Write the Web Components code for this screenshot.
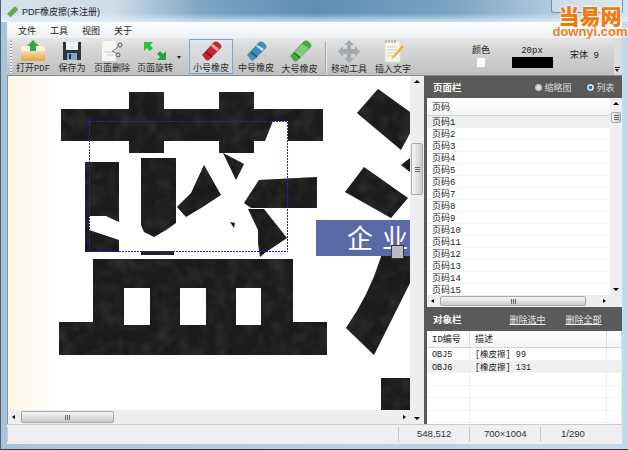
<!DOCTYPE html>
<html lang="zh-CN">
<head>
<meta charset="utf-8">
<title>PDF橡皮擦</title>
<style>
  html,body{margin:0;padding:0;background:#9db8d0}
  body{font-family:"Liberation Mono","Noto Sans CJK SC",monospace;font-size:9px;color:#222}
</style>
</head>
<body>
<pdf-window>
  <title-bar slot="title">PDF橡皮擦(未注册)</title-bar>
  <menu-bar slot="menu"><span>文件</span><span>工具</span><span>视图</span><span>关于</span></menu-bar>
  <tool-bar slot="tools">
    <tool-button label="打开PDF" style="--w:38px">
      <svg width="28" height="22" viewBox="0 0 28 22">
        <defs><linearGradient id="f" x1="0" y1="0" x2="0" y2="1"><stop offset="0" stop-color="#fbeec2"/><stop offset="1" stop-color="#e3a548"/></linearGradient></defs>
        <path d="M2 8h24v12q0 1-1 1H3q-1 0-1-1z" fill="url(#f)"/><path d="M2 8q0-2 2-2h20q2 0 2 2v3H2z" fill="#fdf6dc"/>
        <path d="M14 0l6 6h-3v5h-6V6H8z" fill="#2fa84a"/>
      </svg>
    </tool-button>
    <tool-button label="保存为" style="--w:40px">
      <svg width="22" height="22" viewBox="0 0 22 22">
        <path d="M2 2h18v18H2z" fill="#2c3440"/><path d="M5 2h12v8H5z" fill="#eef3f8"/><path d="M6 13h10v7H6z" fill="#7ea6c8"/><path d="M8 14h2v5H8z" fill="#25303c"/>
      </svg>
    </tool-button>
    <tool-button label="页面删除" style="--w:40px">
      <svg width="26" height="22" viewBox="0 0 26 22">
        <path d="M3 1h14v20H3z" fill="#f6f6f6"/><path d="M6 12h8M8 15h6" stroke="#ccc"/>
        <circle cx="21" cy="5" r="2" fill="none" stroke="#555"/><circle cx="19" cy="15" r="2" fill="none" stroke="#555"/><path d="M19 7l-5 4M17 13l-4-2" stroke="#666"/>
      </svg>
    </tool-button>
    <tool-button label="页面旋转" style="--w:40px;margin-left:3px">
      <svg width="24" height="22" viewBox="0 0 24 22">
        <path d="M1 2l9 0-3 3 3 3-3 3-3-3-3 3z" fill="#28c43a"/><path d="M23 20h-9l3-3-3-3 3-3 3 3 3-3z" fill="#1fa64b"/>
      </svg>
    </tool-button>
    <span class="caret"></span>
    <tool-button label="小号橡皮" selected style="--w:44px;margin-left:5px">
      <svg width="24" height="22" viewBox="0 0 24 22">
        <path d="M3 15L15 2q2-1 4 0l3 3q1 2 0 3L10 20q-2 1-3 0z" fill="#c8242c"/><path d="M14 4l6 5-2 2-6-5z" fill="#f0b0b0"/><path d="M7 12l6 5" stroke="#7c1216" stroke-width="2"/>
      </svg>
    </tool-button>
    <tool-button label="中号橡皮" style="--w:44px;margin-left:1px">
      <svg width="24" height="22" viewBox="0 0 24 22">
        <path d="M3 15L15 2q2-1 4 0l3 3q1 2 0 3L10 20q-2 1-3 0z" fill="#3f8fb8"/><path d="M13 5l7 4-2 2-6-5z" fill="#cfe6f2"/><path d="M7 12l6 5" stroke="#24607e" stroke-width="2"/>
      </svg>
    </tool-button>
    <tool-button label="大号橡皮" style="--w:43px">
      <svg width="26" height="23" viewBox="0 0 26 23">
        <path d="M3 16L17 1q2-1 4 0l3 3q1 2 0 3L10 21q-2 1-3 0z" fill="#46a83e"/><path d="M15 4l7 4-10 11-6-5z" fill="#7fce72"/><path d="M7 13l6 5" stroke="#2a7426" stroke-width="2"/>
      </svg>
    </tool-button>
    <span class="sep"></span>
    <tool-button label="移动工具" style="--w:40px;margin-left:3px">
      <svg width="24" height="23" viewBox="0 0 24 23">
        <path d="M12 0l5 5h-3v4h4V6l5 5.500-5 5.500v-3h-4v4h3l-5 5-5-5h3v-4H6v3L1 11.500 6 6v3h4V5H7z" fill="#a5aaae"/>
      </svg>
    </tool-button>
    <tool-button label="插入文字" style="--w:40px;margin-left:4px">
      <svg width="22" height="24" viewBox="0 0 22 24">
        <path d="M3 2h15v21H3z" fill="#f8f6e8" stroke="#ddd"/><path d="M5 8h10M5 11h10M5 14h8M5 17h6" stroke="#c9cfd6"/>
        <path d="M20 6L11 17l-2 3 3-1L22 8z" fill="#eeb040"/><path d="M4 1v3M7 1v3M10 1v3M13 1v3" stroke="#888"/>
      </svg>
    </tool-button>
    <tool-options></tool-options>
  </tool-bar>
  <doc-view slot="doc"></doc-view>
  <side-panel slot="side"></side-panel>
  <status-bar slot="status"></status-bar>
  <water-mark slot="mark"></water-mark>
</pdf-window>

<script>
function shell(el, html){
  el.attachShadow({mode:'open'}).innerHTML = html;
}

customElements.define('pdf-window', class extends HTMLElement{
  constructor(){
    super();
    shell(this, `<style>
      :host{display:block;position:relative;width:628px;height:450px;overflow:hidden;box-sizing:border-box;
        background:linear-gradient(90deg,#a9c3da 0,#c6d9e9 100%);border-bottom:1px solid #2c3a48;border-left:1px solid #51606e}
      .wrap{display:grid;grid-template-rows:22px 16px 38px 348px 20px;height:444px}
      .mid{display:grid;grid-template-columns:1fr 198px;margin:0 6px 0 6px;min-height:0}
      .inner{margin:0 6px 0 6px}
    </style>
    <div class="wrap">
      <slot name="title"></slot>
      <div class="inner"><slot name="menu"></slot></div>
      <div class="inner"><slot name="tools"></slot></div>
      <div class="mid"><slot name="doc"></slot><slot name="side"></slot></div>
      <div class="inner"><slot name="status"></slot></div>
    </div>
    <slot name="mark"></slot>`);
  }
});

customElements.define('title-bar', class extends HTMLElement{
  constructor(){
    super();
    shell(this, `<style>
      :host{display:flex;align-items:center;gap:4px;height:22px;padding-left:6px;box-sizing:border-box;color:#1d2630;
        font-family:"Liberation Sans","Noto Sans CJK SC",sans-serif;font-size:9px;
        background:linear-gradient(180deg,rgba(255,255,255,0) 60%,rgba(235,243,250,.75) 100%),
          linear-gradient(90deg,#d4e1ec 0,#cfdde9 18%,#7da4c5 32%,#5f8db3 50%,#7ba3c3 72%,#a9c6dd 86%,#d3e2ee 100%);}
      .btns{position:absolute;left:550px;top:0;width:72px;height:13px;box-sizing:border-box;border:1px solid #7d8d9b;border-top:0;border-radius:0 0 3px 3px;background:rgba(235,240,245,.45)}
    </style>
    <svg width="11" height="11" viewBox="0 0 11 11"><path d="M0 8L7 1q1-1 2 0l2 2q0 1-1 2L4 11H2z" fill="#5cae4a"/><path d="M0 8l3 3H1z" fill="#e4eee0"/></svg>
    <slot></slot><span class="btns"></span>`);
  }
});

customElements.define('menu-bar', class extends HTMLElement{
  constructor(){
    super();
    shell(this, `<style>
      :host{display:flex;align-items:center;gap:14px;height:16px;padding-left:11px;background:linear-gradient(180deg,#fafbfd,#eef1f5);color:#1d1d1d}
    </style><slot></slot>`);
  }
});

customElements.define('tool-bar', class extends HTMLElement{
  constructor(){
    super();
    shell(this, `<style>
      :host{display:flex;align-items:flex-start;height:38px;box-sizing:border-box;padding:1px 0 0 3px;position:relative;
        background:linear-gradient(180deg,#e6e6e6 0,#d6d6d6 30%,#c0c0c0 100%);border-bottom:1px solid #8a8a8a}
      .grip{width:2px;height:32px;margin:2px 2px 0 0;background:repeating-linear-gradient(180deg,#8f8f8f 0 1px,#f4f4f4 1px 3px)}
      ::slotted(.caret){width:0;height:0;margin:17px 3px 0 2px;border:2px solid transparent;border-top:3px solid #222;border-bottom:0}
      ::slotted(.sep){width:1px;height:32px;margin:3px 0 0 4px;background:#a8a8a8;box-shadow:1px 0 #e6e6e6}
      .more{position:absolute;right:0;top:0;bottom:0;width:8px;background:#dcdcdc;font-size:0}
      .more i{position:absolute;left:1px;top:31px;width:0;height:0;border:2.500px solid transparent;border-top:3px solid #222;border-bottom:0}
      .more b{position:absolute;left:1px;top:29px;width:5px;height:1px;background:#222}
    </style><span class="grip"></span><slot></slot><span class="more"><b></b><i></i></span>`);
  }
});

customElements.define('tool-button', class extends HTMLElement{
  constructor(){
    super();
    shell(this, `<style>
      :host{display:flex;flex-direction:column;align-items:center;width:var(--w,40px);height:35px;box-sizing:border-box;color:#2b2b2b;border:1px solid transparent;flex:none}
      :host([selected]){border-color:#7fa9cc;background:rgba(225,235,245,.35)}
      .ic{height:23px;display:flex;align-items:flex-end;justify-content:center}
      .lb{line-height:12px;margin-top:1px;white-space:nowrap}
      ::slotted(svg){filter:blur(.3px)}
    </style><div class="ic"><slot></slot></div><div class="lb"></div>`);
  }
  connectedCallback(){
    this.shadowRoot.querySelector('.lb').textContent = this.getAttribute('label');
  }
});

customElements.define('tool-options', class extends HTMLElement{
  constructor(){
    super();
    shell(this, `<style>
      :host{display:flex;align-items:flex-start;color:#222;margin-left:53px}
      .c{display:flex;flex-direction:column;align-items:center}
      .col{width:30px;padding-top:7px;line-height:10px}
      .col i{width:8px;height:9px;background:#fff;margin-top:2px}
      .siz{width:42px;margin-left:15px;padding-top:7px;line-height:10px}
      .siz i{width:41px;height:11px;background:#000;margin-top:1px}
      .fnt{margin-left:17px;padding-top:12px;line-height:10px;white-space:nowrap}
    </style>
    <div class="c col">颜色<i></i></div>
    <div class="c siz">20px<i></i></div>
    <div class="fnt">宋体 9</div>`);
  }
});

customElements.define('scroll-bar', class extends HTMLElement{
  constructor(){
    super();
    shell(this, `<style>
      :host{display:flex;flex-direction:column;width:14px;background:#eeeef0;box-sizing:border-box;flex:none}
      :host([orient=h]){flex-direction:row;width:auto;height:12px}
      .a{flex:none;width:100%;height:12px;display:flex;align-items:center;justify-content:center}
      :host([orient=h]) .a{width:12px;height:100%}
      .t{flex:1;min-width:0;min-height:0;display:flex;flex-direction:column}
      :host([orient=h]) .t{flex-direction:row}
      .th{margin:var(--at) 1px 0;height:var(--len);box-sizing:border-box;border:1px solid #a9a9ad;border-radius:2px;
        background:linear-gradient(90deg,#f6f6f6,#dcdcde 60%,#c8c8cc);display:flex;align-items:center;justify-content:center;flex:none}
      :host([orient=h]) .th{margin:1px 0 1px var(--at);height:auto;width:var(--len);background:linear-gradient(180deg,#f6f6f6,#dcdcde 60%,#c8c8cc)}
      .g{width:5px;height:5px;background:repeating-linear-gradient(180deg,#666 0 1px,transparent 1px 2px)}
      :host([orient=h]) .g{background:repeating-linear-gradient(90deg,#666 0 1px,transparent 1px 2px)}
      svg{display:block}
    </style>
    <div class="a"><svg width="6" height="6" viewBox="0 0 6 6"><path class="p1"/></svg></div>
    <div class="t"><div class="th"><span class="g"></span></div></div>
    <div class="a"><svg width="6" height="6" viewBox="0 0 6 6"><path class="p2"/></svg></div>`);
  }
  connectedCallback(){
    const h = this.getAttribute('orient') === 'h';
    const r = this.shadowRoot;
    r.querySelector('.p1').setAttribute('d', h ? 'M4 1v4L1 3z' : 'M3 1l3 3H0z');
    r.querySelector('.p2').setAttribute('d', h ? 'M2 1v4l3-2z' : 'M0 2h6L3 5z');
    this.style.setProperty('--at', this.getAttribute('at') + 'px');
    this.style.setProperty('--len', this.getAttribute('len') + 'px');
  }
});

customElements.define('doc-view', class extends HTMLElement{
  constructor(){
    super();
    shell(this, `<style>
      :host{display:grid;grid-template-columns:1fr 14px;grid-template-rows:334px 14px;min-width:0;border-left:1px solid #8a949c;box-sizing:border-box;background:#eeeef0}
      .page{overflow:hidden;background:linear-gradient(90deg,#fcf5e6 0,#fefaf2 22px,#fff 48px)}
      svg{display:block}
      scroll-bar[orient=h]{height:14px}
      .k path,.k rect{fill:#1b1b1a}
    </style>
    <div class="page">
      <svg width="403" height="334" viewBox="7 76 403 334">
        <defs>
          <!-- soft scan edges with faint mottling inside the ink -->
          <filter id="soft" x="-5%" y="-5%" width="110%" height="110%" color-interpolation-filters="sRGB">
            <feGaussianBlur in="SourceGraphic" stdDeviation=".55" result="ink"/>
            <feTurbulence type="fractalNoise" baseFrequency=".07" numOctaves="2" seed="4"/>
            <feColorMatrix values="0 0 0 0 .2  0 0 0 0 .2  0 0 0 0 .19  1.6 0 0 0 -.6" result="spots"/>
            <feComposite in="spots" in2="ink" operator="in" result="inked"/>
            <feMerge><feMergeNode in="ink"/><feMergeNode in="inked"/></feMerge>
          </filter>
        </defs>
        <g class="k" filter="url(#soft)">
          <path d="M60 109H128V92H163V109H218V92H253V109H322V141H253V153H218V141H163V153H128V141H60z"/>
          <path d="M84 162H118V222L105 216H84z"/>
          <path d="M84 216H88V230L118 240V252H84z"/>
          <path d="M140 158H175V223L165 230 153 237 143 232 140 225z"/>
          <rect x="140" y="251" width="33" height="4"/>
          <path d="M222 153L243 164 235 180z"/>
          <path d="M203 165L220 195 200 208 185 217 176 207 190 193z"/>
          <path d="M258 180L316 177V208H250L243 203z"/>
          <path d="M247 209H263L286 238 265 252 259 257 257 243 257 230z"/>
          <path d="M229 222L234 223 233 228z"/>
          <path d="M92 259H292V322H326V355H58V322H92zM123 288V325H149V288zM179 288V325H205V288zM235 288V325H260V288z" fill-rule="evenodd"/>
          <path d="M377 89L409 112V133L400 150 356 113z"/>
          <path d="M363 167L407 198 390 218 344 192z"/>
          <path d="M409 158L400 165 409 172z"/>
          <path d="M380 256H409V283L373 355 345 328Q368 295 380 257z"/>
          <rect x="380" y="378" width="30" height="32"/>
        </g>
        <path d="M272 121H287V141H264z" fill="#fff"/>
        <rect x="315" y="220" width="95" height="36" fill="#5a6aa6"/>
        <text x="346" y="248" font-family="Noto Sans CJK SC" font-size="26" fill="#fff">企</text>
        <text x="381" y="248" font-family="Noto Sans CJK SC" font-size="26" fill="#fff">业</text>
        <rect x="390.500" y="245.500" width="12" height="13" fill="#b9bcc6" stroke="#33363e"/>
        <rect x="88.500" y="121.500" width="198" height="130" fill="none" stroke="#2222c4" stroke-dasharray="2 1" shape-rendering="crispEdges"/>
      </svg>
    </div>
    <scroll-bar style="grid-row:1 / 3;grid-column:2" at="55" len="52"></scroll-bar>
    <scroll-bar orient="h" at="1" len="93"></scroll-bar>`);
  }
});

customElements.define('side-panel', class extends HTMLElement{
  constructor(){
    super();
    shell(this, `<style>
      :host{display:grid;grid-template-rows:22px 209px 24px 93px;background:#5a5a5a;padding-left:3px;box-sizing:border-box;min-width:0;color:#222}
      .head{display:flex;align-items:center;color:#fff;padding-left:6px;font-weight:700;font-size:9.500px;font-family:"Noto Sans CJK SC",sans-serif}
      .r{display:flex;align-items:center;gap:3px;font-weight:400;font-size:9px;color:#d8d8d8}
      .dot{width:7px;height:7px;border-radius:50%;background:radial-gradient(circle,#eee,#aaa)}
      .dot.on{background:radial-gradient(circle,#2b6fb4 0 30%,#dfe9f2 45%,#aab 100%)}
      a{color:#e8e8e8;text-decoration:underline;font-weight:400;font-size:9px}
    </style>
    <div class="head"><span>页面栏</span>
      <span class="r" style="margin-left:73px"><i class="dot"></i>缩略图</span>
      <span class="r" style="margin-left:15px"><i class="dot on"></i>列表</span>
    </div>
    <page-list></page-list>
    <div class="head"><span>对象栏</span>
      <a style="margin-left:48px">删除选中</a><a style="margin-left:20px">删除全部</a>
    </div>
    <object-list></object-list>`);
  }
});

customElements.define('page-list', class extends HTMLElement{
  constructor(){
    super();
    let rows = '';
    for(let i = 1; i <= 15; i++) rows += `<div class="row${i === 1 ? ' sel' : ''}">页码${i}</div>`;
    shell(this, `<style>
      :host{display:grid;grid-template-columns:1fr 12px;grid-template-rows:197px 12px;background:#fff;min-height:0;min-width:0}
      .list{overflow:hidden;min-height:0;padding-top:2px;box-sizing:border-box}
      .hd{height:16px;line-height:17px;padding-left:5px;box-sizing:border-box;background:linear-gradient(180deg,#fff,#f2f3f5);border-bottom:1px solid #d5d5d5}
      .row{height:12px;line-height:14px;padding-left:5px;box-sizing:border-box;border-bottom:1px solid #f2f2f2}
      .sel{background:#efefef}
      .c{background:#eeeef0}
    </style>
    <div class="list"><div class="hd">页码</div>${rows}</div>
    <scroll-bar at="2" len="11" style="width:12px"></scroll-bar>
    <scroll-bar orient="h" at="1" len="146"></scroll-bar>
    <div class="c"></div>`);
  }
});

customElements.define('object-list', class extends HTMLElement{
  constructor(){
    super();
    shell(this, `<style>
      :host{display:block;background:#fff;min-height:0;overflow:hidden}
      .r{display:grid;grid-template-columns:43px 137px 1fr;height:12.500px;line-height:14px;font-size:8.500px;border-bottom:1px solid #f3f3f3;box-sizing:border-box}
      .r span{padding-left:5px;border-right:1px solid #eee;white-space:nowrap;overflow:hidden}
      .h{height:17px;line-height:19px;font-size:9px;border-bottom:1px solid #d5d5d5;background:linear-gradient(180deg,#fff,#f4f5f6)}
      .h span{border-right-color:#ddd}
      .alt{background:#efefef}
    </style>
    <div class="r h"><span>ID编号</span><span>描述</span><span></span></div>
    <div class="r"><span>OBJ5</span><span>[橡皮擦] 99</span><span></span></div>
    <div class="r alt"><span>OBJ6</span><span>[橡皮擦] 131</span><span></span></div>
    <div class="r"><span></span><span></span><span></span></div>
    <div class="r"><span></span><span></span><span></span></div>
    <div class="r"><span></span><span></span><span></span></div>
    <div class="r"><span></span><span></span><span></span></div>`);
  }
});

customElements.define('status-bar', class extends HTMLElement{
  constructor(){
    super();
    shell(this, `<style>
      :host{display:grid;grid-template-columns:1fr 71px 71px 82px;height:20px;background:#f0eeee;font:9.500px/14px "Liberation Sans",sans-serif;color:#333;border-top:1px solid #c9c9c9;box-sizing:border-box}
      div{display:flex;align-items:center;padding:0 0 1px 14px;margin:2px 0;border-left:1px solid #c8c8c8}
      div:first-child{border:0}
    </style><div></div><div style="padding-left:18px">548,512</div><div>700×1004</div><div style="padding-left:20px">1/290</div>`);
  }
});

customElements.define('water-mark', class extends HTMLElement{
  constructor(){
    super();
    shell(this, `<style>
      :host{position:absolute;left:552px;top:5px;width:74px;display:flex;flex-direction:column;align-items:center;color:#f07a12;line-height:1;
        text-shadow:0 0 2px #fff,0 0 2px #fff,0 0 3px #fff}
      .a{font:900 21px/21px "Noto Sans CJK SC",sans-serif}
      .b{font:700 13px/12px "Liberation Sans",sans-serif}
    </style><div class="a">当易网</div><div class="b">downyi.com</div>`);
  }
});
</script>
</body>
</html>
